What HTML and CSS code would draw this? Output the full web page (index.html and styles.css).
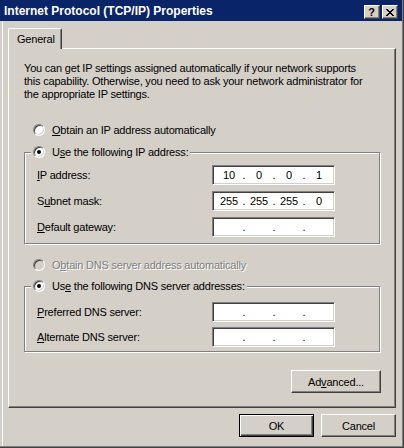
FILE: index.html
```html
<!DOCTYPE html>
<html>
<head>
<meta charset="utf-8">
<title>Internet Protocol (TCP/IP) Properties</title>
<link rel="stylesheet" href="styles.css">
</head>
<body>
<div class="window">
  <div class="titlebar">
    <span class="title">Internet Protocol (TCP/IP) Properties</span>
    <div class="tb-buttons">
      <span class="tb-btn help">?</span>
      <span class="tb-btn close"><svg width="8" height="7" viewBox="0 0 8 7" shape-rendering="crispEdges"><g fill="#000"><rect x="0" y="0" width="2" height="1"/><rect x="6" y="0" width="2" height="1"/><rect x="1" y="1" width="2" height="1"/><rect x="5" y="1" width="2" height="1"/><rect x="2" y="2" width="4" height="1"/><rect x="3" y="3" width="2" height="1"/><rect x="2" y="4" width="4" height="1"/><rect x="1" y="5" width="2" height="1"/><rect x="5" y="5" width="2" height="1"/><rect x="0" y="6" width="2" height="1"/><rect x="6" y="6" width="2" height="1"/></g></svg></span>
    </div>
  </div>
  <div class="body">
    <div class="tabs"><div class="tab">General</div></div>
    <div class="panel">
      <p class="intro">You can get IP settings assigned automatically if your network supports<br>this capability. Otherwise, you need to ask your network administrator for<br>the appropriate IP settings.</p>

      <div class="radio-row r-ip"><span class="radio"></span><span><u>O</u>btain an IP address automatically</span></div>

      <div class="group g-ip">
        <div class="legend"><span class="radio checked"></span><span>U<u>s</u>e the following IP address:</span></div>
        <div class="field-row first-ip"><span class="label"><u>I</u>P address:</span>
          <span class="field"><span class="oct">10</span><span class="dot">.</span><span class="oct">0</span><span class="dot">.</span><span class="oct">0</span><span class="dot">.</span><span class="oct">1</span></span></div>
        <div class="field-row next-ip"><span class="label">S<u>u</u>bnet mask:</span>
          <span class="field"><span class="oct">255</span><span class="dot">.</span><span class="oct">255</span><span class="dot">.</span><span class="oct">255</span><span class="dot">.</span><span class="oct">0</span></span></div>
        <div class="field-row next-ip"><span class="label"><u>D</u>efault gateway:</span>
          <span class="field"><span class="oct"></span><span class="dot">.</span><span class="oct"></span><span class="dot">.</span><span class="oct"></span><span class="dot">.</span><span class="oct"></span></span></div>
      </div>

      <div class="radio-row r-dns disabled"><span class="radio"></span><span class="dis-text">O<u>b</u>tain DNS server address automatically</span></div>

      <div class="group g-dns">
        <div class="legend"><span class="radio checked"></span><span>Us<u>e</u> the following DNS server addresses:</span></div>
        <div class="field-row first-dns"><span class="label"><u>P</u>referred DNS server:</span>
          <span class="field"><span class="oct"></span><span class="dot">.</span><span class="oct"></span><span class="dot">.</span><span class="oct"></span><span class="dot">.</span><span class="oct"></span></span></div>
        <div class="field-row next-dns"><span class="label"><u>A</u>lternate DNS server:</span>
          <span class="field"><span class="oct"></span><span class="dot">.</span><span class="oct"></span><span class="dot">.</span><span class="oct"></span><span class="dot">.</span><span class="oct"></span></span></div>
      </div>

      <div class="adv-row"><button class="btn adv">Ad<u>v</u>anced...</button></div>
    </div>
    <div class="footer">
      <button class="btn default">OK</button>
      <button class="btn">Cancel</button>
    </div>
  </div>
</div>
</body>
</html>
```
FILE: styles.css
```css
html, body {
  margin: 0;
  background: #d4d0c8;
}
body {
  font-family: "Liberation Sans", Arial, sans-serif;
  font-size: 11px;
  letter-spacing: -0.2px;
  color: #000;
}
u { text-decoration: underline; text-underline-offset: 1px; }

.window {
  width: 404px;
  height: 448px;
  box-sizing: border-box;
  background: #d4d0c8;
  border-right: 1px solid #404040;
  border-bottom: 1px solid #404040;
  box-shadow: inset -1px -1px #808080, inset 2px 0 #d4d0c8, inset 3px 0 #fff;
  display: flex;
  flex-direction: column;
}

.titlebar {
  height: 21px;
  margin-right: 1px;
  background: #0a246a;
  color: #fff;
  display: flex;
  align-items: center;
  justify-content: space-between;
  padding: 0 4px;
  flex: none;
}
.title {
  font-weight: bold;
  font-size: 12px;
  letter-spacing: 0;
  line-height: 14px;
}
.tb-buttons {
  display: flex;
  gap: 2px;
  align-self: flex-start;
  margin-top: 5px;
}
.tb-btn {
  width: 16px;
  height: 14px;
  box-sizing: border-box;
  background: #d4d0c8;
  border-top: 1px solid #fff;
  border-left: 1px solid #fff;
  border-right: 1px solid #404040;
  border-bottom: 1px solid #404040;
  box-shadow: inset -1px -1px #808080;
  display: flex;
  align-items: center;
  justify-content: center;
  color: #000;
}
.help {
  font-weight: bold;
  font-size: 11px;
  line-height: 11px;
  letter-spacing: 0;
  padding-right: 1px;
}

.body {
  flex: 1;
  padding: 7px 7px 0 8px;
}

.tabs {
  display: flex;
  height: 20px;
}
.tab {
  position: relative;
  z-index: 1;
  width: 54px;
  height: 21px;
  box-sizing: border-box;
  background: #d4d0c8;
  border-left: 1px solid #fff;
  border-top: 1px solid #fff;
  border-right: 1px solid #404040;
  border-radius: 2px 2px 0 0;
  box-shadow: inset -1px 0 #808080;
  padding: 3px 0 0 8px;
  line-height: 14px;
}

.panel {
  width: 388px;
  height: 360px;
  box-sizing: border-box;
  border-left: 1px solid #fff;
  border-top: 1px solid #fff;
  border-right: 1px solid #404040;
  border-bottom: 1px solid #404040;
  box-shadow: inset -1px -1px #808080;
  display: flex;
  flex-direction: column;
}

.intro {
  margin: 13px 0 0 15px;
  line-height: 13px;
  white-space: nowrap;
}

.radio-row {
  display: flex;
  align-items: center;
  gap: 7px;
  height: 16px;
  margin-left: 24px;
  white-space: nowrap;
}
.r-ip { margin-top: 21px; }
.r-dns { margin-top: 13px; }

.radio {
  width: 12px;
  height: 12px;
  box-sizing: border-box;
  border-radius: 50%;
  border: 1px solid;
  border-color: #808080 #fff #fff #808080;
  box-shadow: inset 1px 1px #404040, inset -1px -1px #d4d0c8;
  background: #fff;
  flex: none;
  display: flex;
  align-items: center;
  justify-content: center;
}
.radio.checked::after {
  content: "";
  width: 4px;
  height: 4px;
  border-radius: 50%;
  background: #000;
}
.disabled .radio { background: #d4d0c8; }
.dis-text {
  color: #808080;
  text-shadow: 1px 1px 0 #fff;
}

.group {
  margin-left: 15px;
  width: 356px;
  box-sizing: border-box;
  border: 1px solid #808080;
  box-shadow: inset 1px 1px #fff, 1px 1px #fff;
  display: flex;
  flex-direction: column;
}
.g-ip { margin-top: 14px; height: 92px; }
.g-dns { margin-top: 13px; height: 66px; }

.legend {
  display: flex;
  align-items: center;
  gap: 7px;
  width: fit-content;
  height: 16px;
  margin: -9px 0 0 6px;
  padding: 0 2px;
  background: #d4d0c8;
  white-space: nowrap;
}

.field-row {
  display: flex;
  align-items: center;
  height: 20px;
  margin-left: 12px;
}
.first-ip { margin-top: 5px; }
.next-ip { margin-top: 6px; }
.first-dns { margin-top: 8px; }
.next-dns { margin-top: 5px; }

.label {
  width: 175px;
  white-space: nowrap;
}
.field {
  width: 123px;
  height: 20px;
  box-sizing: border-box;
  background: #fff;
  border: 1px solid;
  border-color: #808080 #fff #fff #808080;
  box-shadow: inset 1px 1px #404040, inset -1px -1px #d4d0c8;
  display: flex;
  align-items: center;
  padding-left: 3px;
}
.oct {
  width: 26px;
  text-align: center;
}
.dot {
  width: 4px;
  text-align: center;
}

.adv-row {
  display: flex;
  justify-content: flex-end;
  margin: 18px 14px 0 0;
}

.btn {
  width: 75px;
  height: 23px;
  box-sizing: border-box;
  background: #d4d0c8;
  border: 1px solid;
  border-color: #fff #404040 #404040 #fff;
  box-shadow: inset -1px -1px #808080;
  font-family: inherit;
  font-size: 11px;
  letter-spacing: inherit;
  color: #000;
  padding: 0;
  margin: 0;
  display: flex;
  align-items: center;
  justify-content: center;
}
.btn.adv { width: 90px; }
.btn.default {
  border-color: #000;
  box-shadow: inset 1px 1px #fff, inset -1px -1px #404040, inset -2px -2px #808080;
}

.footer {
  display: flex;
  justify-content: flex-end;
  gap: 7px;
  margin-top: 6px;
}
```
